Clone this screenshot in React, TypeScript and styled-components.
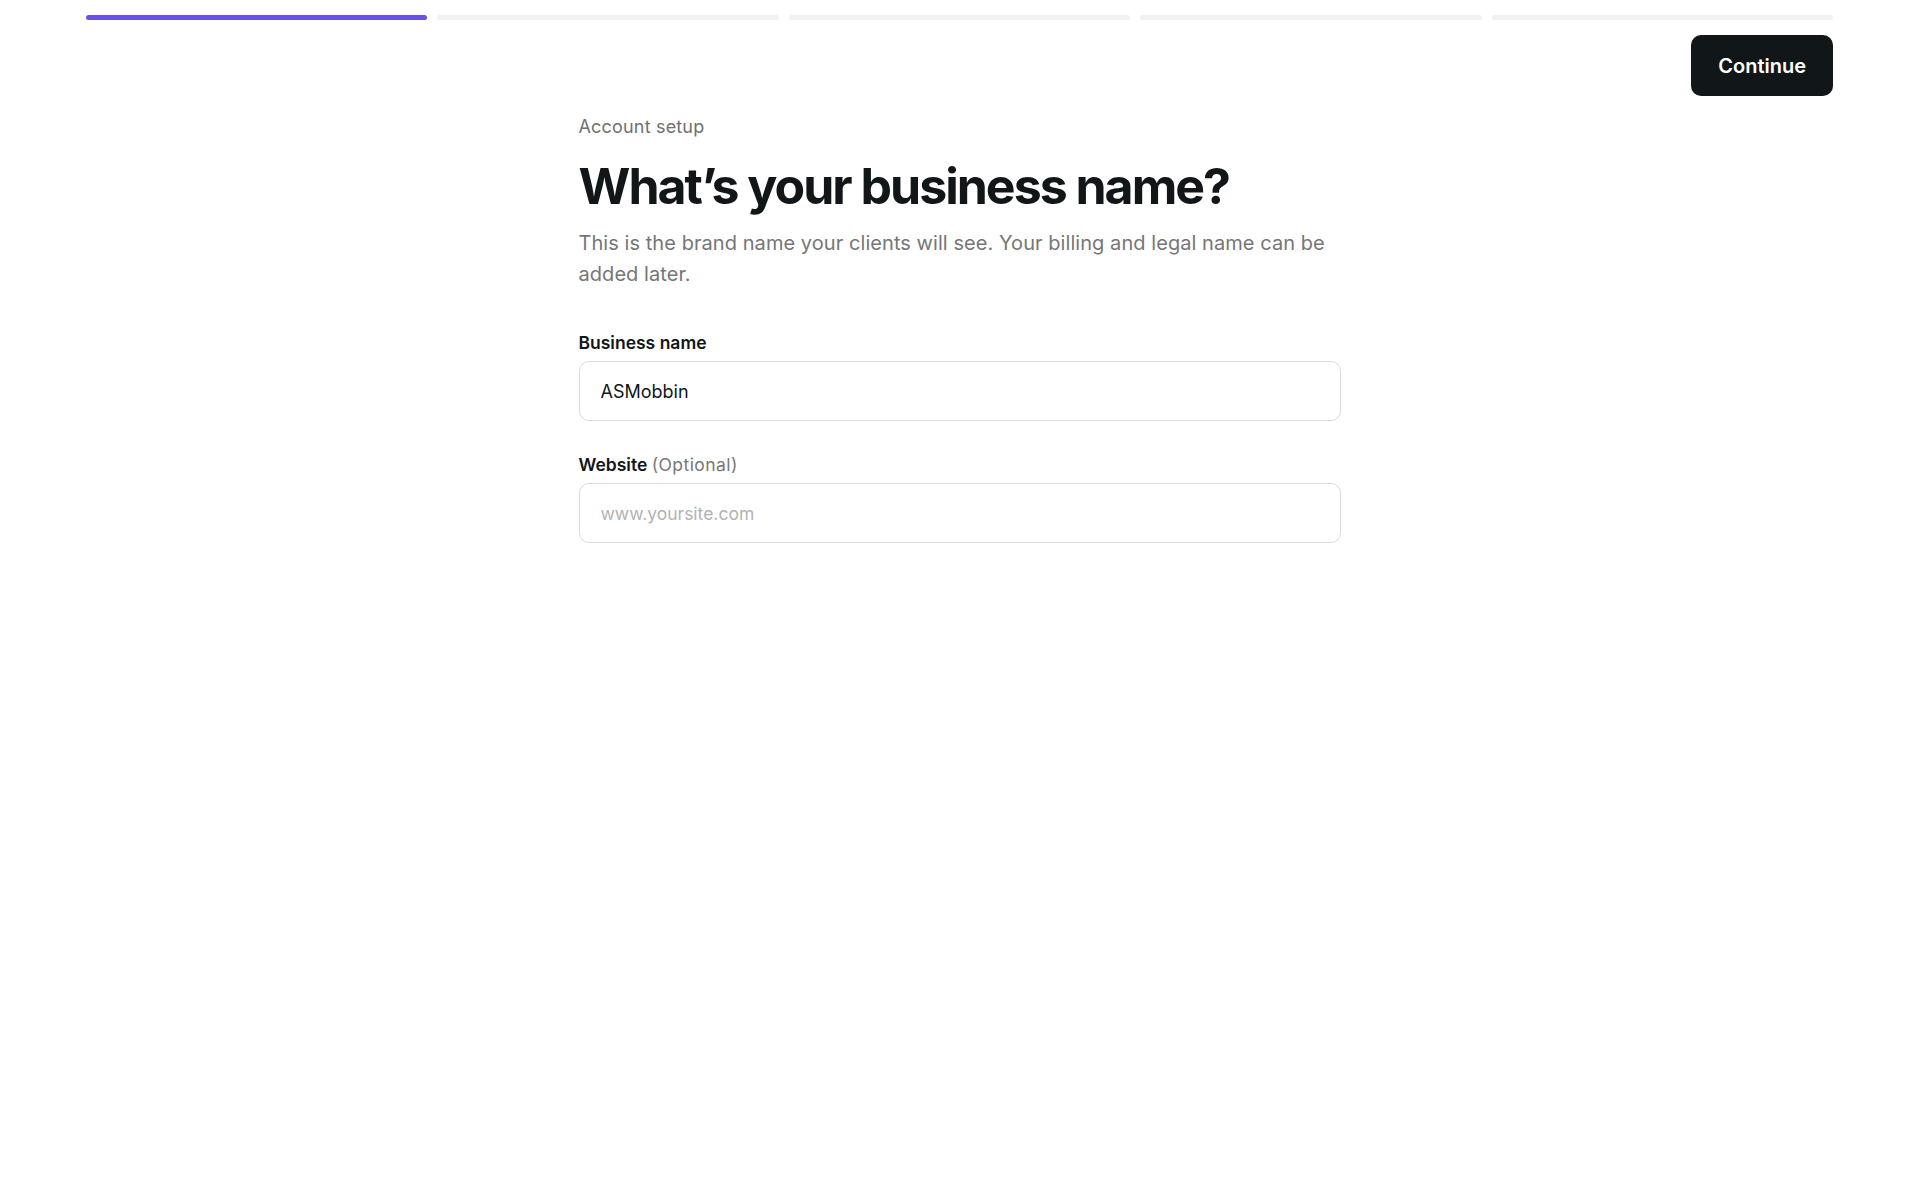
import styled, { createGlobalStyle } from 'styled-components'

const GlobalStyle = createGlobalStyle`
  html, body {
    margin: 0;
    padding: 0;
    background: #ffffff;
    font-family: Inter, "Noto Sans", "Liberation Sans", sans-serif;
    color: #111618;
  }
  * { box-sizing: border-box; }
`

const Page = styled.div`
  padding: 15px 87px 0 86px;
  min-height: 1200px;
`

const Progress = styled.div`
  display: grid;
  grid-template-columns: repeat(5, 1fr);
  gap: 10px;
`

const Step = styled.div<{ $done?: boolean }>`
  height: 5px;
  border-radius: 3px;
  background: ${p => (p.$done ? '#6b50e4' : '#f1f1f1')};
`

const TopActions = styled.div`
  display: flex;
  justify-content: flex-end;
  margin-top: 15px;
`

const PrimaryButton = styled.button`
  height: 61px;
  padding: 0 27px;
  border: none;
  border-radius: 10px;
  background: #111618;
  color: #ffffff;
  font-family: inherit;
  font-size: 20px;
  font-weight: 600;
  cursor: pointer;
`

const Main = styled.main`
  width: 762px;
  margin: 18px auto 0;
`

const Eyebrow = styled.div`
  font-size: 18px;
  line-height: 25px;
  color: #707070;
  letter-spacing: 0.01em;
`

const Title = styled.h1`
  margin: 16px 0 0;
  font-size: 50px;
  line-height: 62px;
  font-weight: 700;
  letter-spacing: -0.04em;
  color: #111618;
`

const Lead = styled.p`
  margin: 11px 0 0;
  font-size: 20px;
  line-height: 31px;
  color: #767676;
  letter-spacing: 0.003em;
`

const Field = styled.div<{ $gap: number }>`
  margin-top: ${p => p.$gap}px;
  display: flex;
  flex-direction: column;
  gap: 6px;
`

const Label = styled.label`
  font-size: 17.5px;
  line-height: 24px;
  font-weight: 600;
  color: #111618;
`

const Hint = styled.span`
  font-weight: 400;
  color: #777777;
  letter-spacing: 0.025em;
`

const Input = styled.input`
  width: 100%;
  height: 60px;
  padding: 0 21px;
  border: 1px solid #dcdcdc;
  border-radius: 10px;
  font-family: inherit;
  font-size: 18px;
  color: #111618;
  background: #ffffff;
  outline: none;
  &::placeholder {
    color: #b3b3b3;
    font-size: 17.5px;
  }
`

const steps = [true, false, false, false, false]

export default function App() {
  return (
    <>
      <GlobalStyle />
      <Page>
        <Progress>
          {steps.map((done, i) => (
            <Step key={i} $done={done} />
          ))}
        </Progress>
        <TopActions>
          <PrimaryButton>Continue</PrimaryButton>
        </TopActions>
        <Main>
          <Eyebrow>Account setup</Eyebrow>
          <Title>What’s your business name?</Title>
          <Lead>
            This is the brand name your clients will see. Your billing and legal name can be added later.
          </Lead>
          <Field $gap={41}>
            <Label htmlFor="business">Business name</Label>
            <Input id="business" defaultValue="ASMobbin" />
          </Field>
          <Field $gap={32}>
            <Label htmlFor="website">
              Website <Hint>(Optional)</Hint>
            </Label>
            <Input id="website" placeholder="www.yoursite.com" />
          </Field>
        </Main>
      </Page>
    </>
  )
}
